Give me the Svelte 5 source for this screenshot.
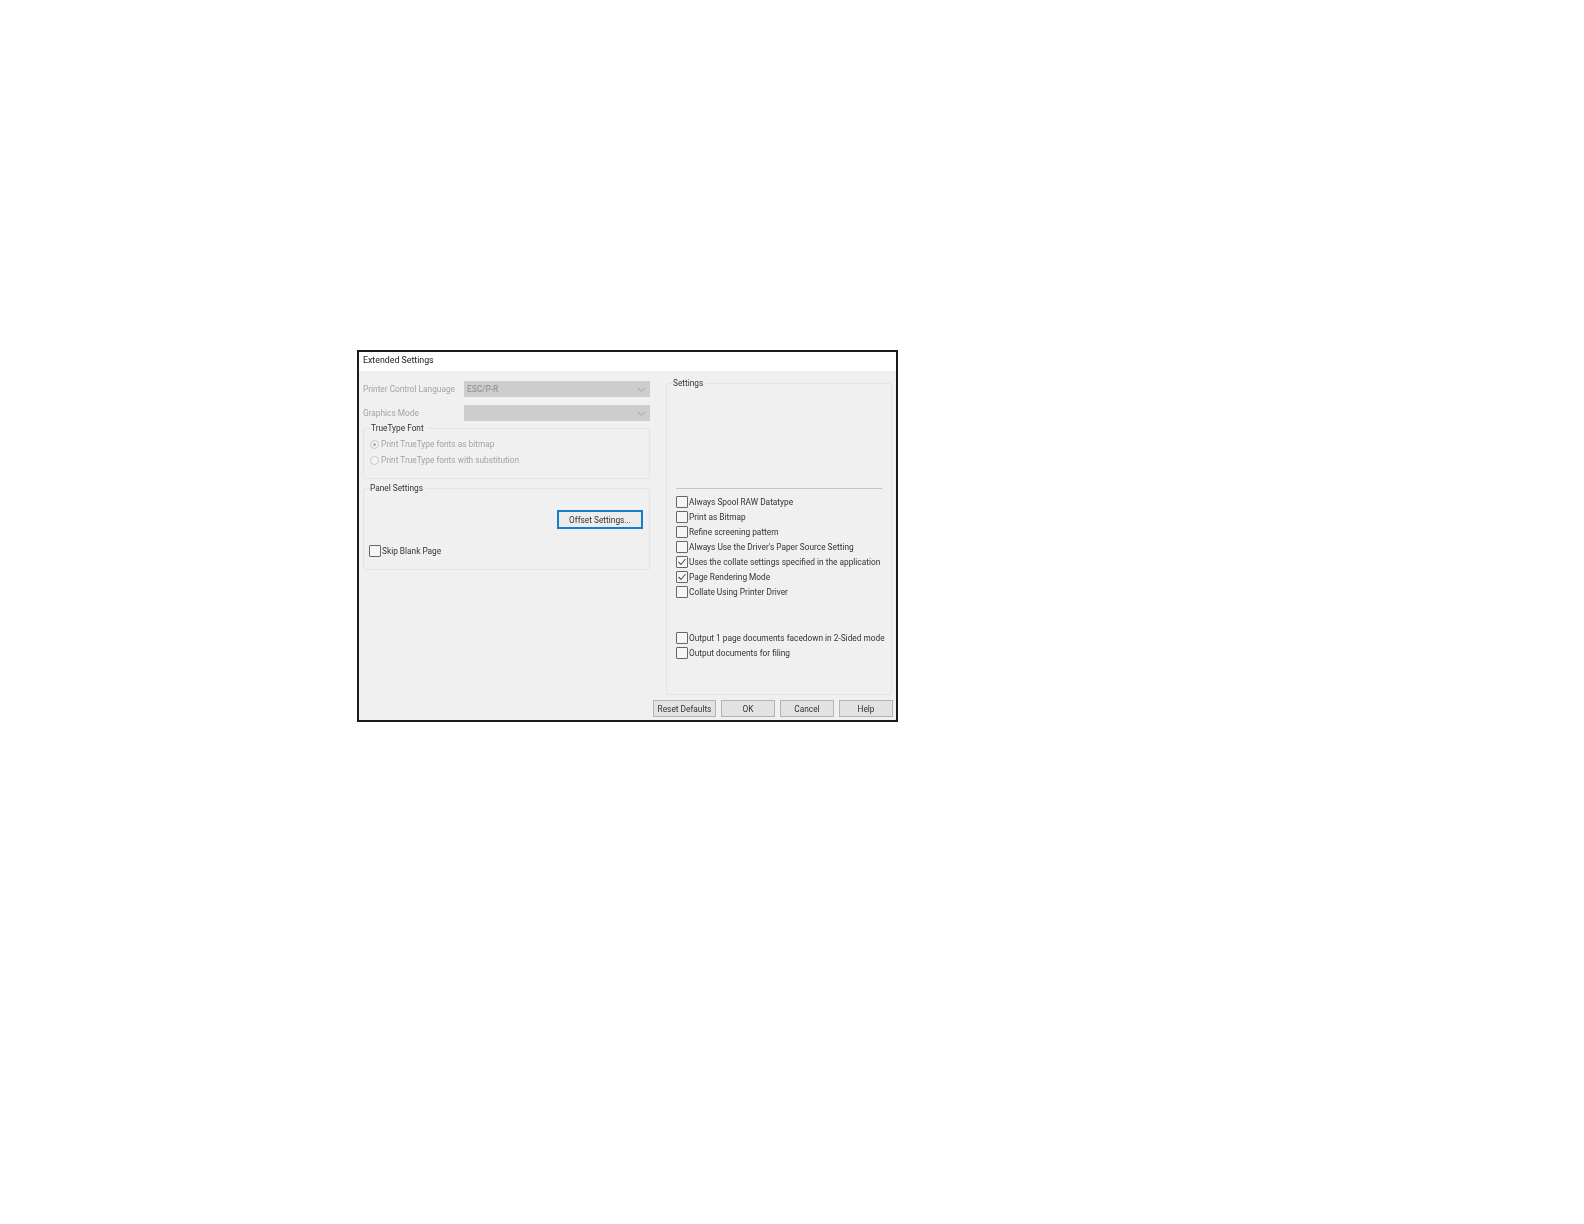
<script lang="ts">

	// Variables

	const optionsTop = [
		{label: "Always Spool RAW Datatype", checked: false},
		{label: "Print as Bitmap", checked: false},
		{label: "Refine screening pattern", checked: false},
		{label: "Always Use the Driver's Paper Source Setting", checked: false},
		{label: "Uses the collate settings specified in the application", checked: true},
		{label: "Page Rendering Mode", checked: true},
		{label: "Collate Using Printer Driver", checked: false}
	];

	const optionsBottom = [
		{label: "Output 1 page documents facedown in 2-Sided mode", checked: false},
		{label: "Output documents for filing", checked: false}
	];

</script>

{#snippet chevron()}
	<svg class="chevron" width="9" height="6" viewBox="0 0 9 6"><path d="M1 1l3.5 3.5L8 1" fill="none" stroke="#a2a2a2" stroke-width="1"/></svg>
{/snippet}

{#snippet option(item: {label: string, checked: boolean})}
	<div class="check-row">
		<span class="box">
			{#if item.checked}
				<svg width="10" height="10" viewBox="0 0 10 10"><path d="M1.5 5l2.5 2.5L8.5 2" fill="none" stroke="#555" stroke-width="1.1"/></svg>
			{/if}
		</span>
		<span>{item.label}</span>
	</div>
{/snippet}

<div class="window">

	<div class="title">Extended Settings</div>

	<div class="body">

		<div class="columns">

			<div class="left">
				<div class="field">
					<span class="muted field-label">Printer Control Language</span>
					<div class="select">ESC/P-R{@render chevron()}</div>
				</div>
				<div class="field">
					<span class="muted field-label">Graphics Mode</span>
					<div class="select">{@render chevron()}</div>
				</div>

				<fieldset class="truetype">
					<legend>TrueType Font</legend>
					<div class="radio-row muted"><span class="radio on"></span>Print TrueType fonts as bitmap</div>
					<div class="radio-row muted"><span class="radio"></span>Print TrueType fonts with substitution</div>
				</fieldset>

				<fieldset class="panel">
					<legend>Panel Settings</legend>
					<div class="offset-row">
						<button class="btn focused">Offset Settings...</button>
					</div>
					{@render option({label: "Skip Blank Page", checked: false})}
				</fieldset>
			</div>

			<fieldset class="settings">
				<legend>Settings</legend>
				<div class="rule"></div>
				{#each optionsTop as item}
					{@render option(item)}
				{/each}
				<div class="spacer"></div>
				{#each optionsBottom as item}
					{@render option(item)}
				{/each}
			</fieldset>

		</div>

		<div class="footer">
			<button class="btn reset">Reset Defaults</button>
			<button class="btn">OK</button>
			<button class="btn">Cancel</button>
			<button class="btn">Help</button>
		</div>

	</div>

</div>

<style>

	:global(body){
		background: #fff;
	}

	.window{
		box-sizing: border-box;
		width: 541px;
		height: 372px;
		margin: 350px 0 0 357px;
		border: 2px solid #1a1a1a;
		background: #f0f0f0;
		display: flex;
		flex-direction: column;
		font-family: Roboto, "Open Sans", sans-serif;
		font-size: 8.3px;
		line-height: 12px;
		color: #333;
	}

	.title{
		height: 19px;
		padding: 1px 0 0 4px;
		box-sizing: border-box;
		background: #fff;
		color: #222;
		font-size: 8.8px;
		line-height: 14px;
		filter: blur(.6px);
	}

	.body{
		flex: 1;
		display: flex;
		flex-direction: column;
		min-height: 0;
		filter: blur(.6px);
	}

	.columns{
		height: 324px;
		display: flex;
		gap: 16px;
		padding: 6px 4px 0 4px;
		box-sizing: border-box;
	}

	.left{
		width: 287px;
		padding-top: 4px;
	}

	.field{
		display: flex;
		height: 16px;
		margin-bottom: 8px;
		align-items: center;
	}

	.field-label{
		width: 101px;
		white-space: nowrap;
	}

	.muted{
		color: #a3a3a3;
	}

	.select{
		flex: 1;
		height: 16px;
		padding-left: 3px;
		background: #cdcdcd;
		color: #8b8b8b;
		line-height: 16px;
		position: relative;
	}

	.chevron{
		position: absolute;
		right: 4px;
		top: 6px;
	}

	fieldset{
		margin: 0;
		padding: 0 5px;
		border: 1px solid #e4e4e4;
		border-radius: 2px;
		box-sizing: border-box;
		min-width: 0;
	}

	legend{
		padding: 0 3px 0 0;
		margin-left: 1px;
		color: #333;
	}

	.truetype{
		height: 57px;
		margin-top: -7px;
		padding: 2px 5px 0 6px;
	}

	.radio-row{
		display: flex;
		align-items: center;
		height: 16px;
		gap: 2px;
		white-space: nowrap;
	}

	.radio{
		width: 9px;
		height: 9px;
		border: 1px solid #c4c4c4;
		border-radius: 50%;
		box-sizing: border-box;
		background: #f4f4f4;
		position: relative;
	}

	.radio.on::after{
		content: "";
		position: absolute;
		inset: 2px;
		border-radius: 50%;
		background: #aaa;
	}

	.panel{
		height: 88px;
		margin-top: 3px;
	}

	.offset-row{
		display: flex;
		justify-content: flex-end;
		padding: 16px 1px 0 0;
		margin-bottom: 14px;
	}

	.btn{
		margin: 0;
		padding: 0;
		height: 17px;
		width: 54px;
		border: 1px solid #b4b4b4;
		background: #e2e2e2;
		font: inherit;
		color: #333;
	}

	.btn.focused{
		width: 86px;
		height: 19px;
		border: 2px solid #1b7cc8;
		background: #ececec;
	}

	.btn.reset{
		width: 63px;
	}

	.settings{
		width: 226px;
		padding: 0 0 0 9px;
	}

	.settings legend{
		margin-left: -3px;
	}

	.rule{
		height: 1px;
		width: 206px;
		margin: 99px 0 5px 0;
		background: #c4c4c4;
	}

	.check-row{
		display: flex;
		align-items: center;
		height: 15px;
		gap: 1px;
		white-space: nowrap;
	}

	.box{
		flex: none;
		width: 10px;
		height: 10px;
		border: 1px solid #666;
		border-radius: 1px;
		background: #f6f6f6;
		display: flex;
	}

	.spacer{
		height: 31px;
	}

	.footer{
		display: flex;
		justify-content: flex-end;
		gap: 5px;
		padding: 5px 3px 0 0;
	}

</style>
